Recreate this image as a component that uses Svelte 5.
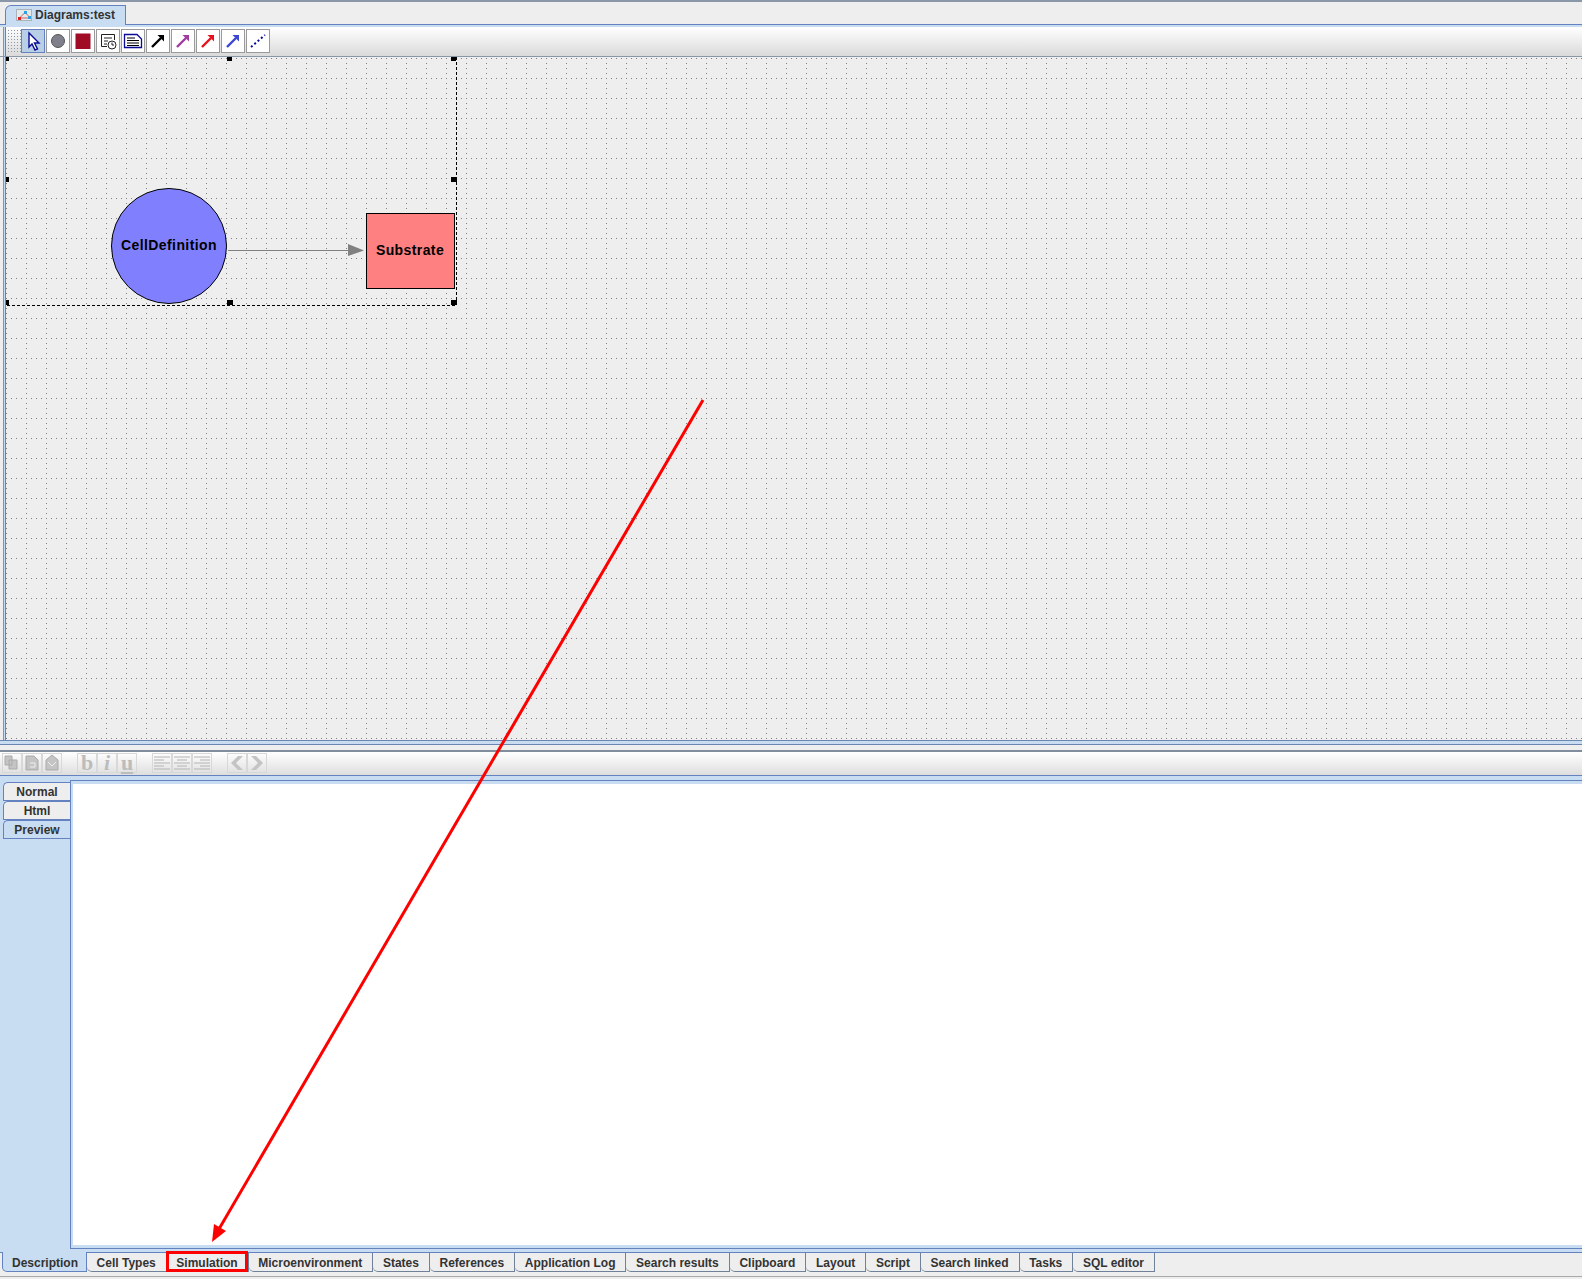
<script lang="ts">
  const bottomTabs = [
    "Description", "Cell Types", "Simulation", "Microenvironment", "States", "References",
    "Application Log", "Search results", "Clipboard", "Layout", "Script", "Search linked",
    "Tasks", "SQL editor",
  ];
  const viewTabs = ["Normal", "Html", "Preview"];
  const arrowColors = ["#000000", "#a03ca0", "#e8101c", "#3c46d2"];
  const handles = [
    [6, 57, 3, 4], [227, 57, 5, 4], [451, 57, 5, 4],
    [6, 177, 3, 5], [451, 177, 6, 5],
    [6, 300, 3, 5], [227, 300, 6, 5], [451, 300, 6, 5],
  ];
</script>

<div class="app">
  <div class="top-line"></div>
  <div class="tab-strip">
    <div class="doc-tab">
      <svg width="16" height="12" viewBox="0 0 16 12">
        <rect x="0.5" y="0.5" width="15" height="11" fill="#e4eaec" stroke="#aab4b8" />
        <path d="M4 8.5 L9 3.5 L13 7.5 M4 9 H12" fill="none" stroke="#d06060" />
        <rect x="2" y="8" width="3" height="3" fill="#e02020" />
        <rect x="8" y="2" width="3" height="3" fill="#30a0e0" />
        <rect x="12" y="7" width="3" height="3" fill="#30a0e0" />
      </svg>
      <span>Diagrams:test</span>
    </div>
  </div>

  <div class="toolbar">
    <div class="grip"></div>
    <div class="tool active">
      <svg width="20" height="20" viewBox="0 0 20 20">
        <path d="M6 2 L6 16 L9 13 L12 19 L14.5 18 L11.5 12 L16 12 Z" fill="#fff" stroke="#0a0a96" stroke-width="1.4" />
      </svg>
    </div>
    <div class="tool">
      <svg width="20" height="20" viewBox="0 0 20 20">
        <circle cx="10" cy="10" r="6.5" fill="#80808c" stroke="#555" />
      </svg>
    </div>
    <div class="tool">
      <svg width="20" height="20" viewBox="0 0 20 20">
        <rect x="2.5" y="2.5" width="15" height="15.5" fill="#a00c24" />
      </svg>
    </div>
    <div class="tool">
      <svg width="20" height="20" viewBox="0 0 20 20">
        <path d="M3.5 3.5 H16.5 V9 M3.5 3.5 V15.5 H9 M6 7 H14 M6 10 H10 M6 13 H9" fill="none" stroke="#222" />
        <circle cx="14" cy="14" r="4" fill="#fff" stroke="#222" />
        <path d="M14 11.5 V14 H16" fill="none" stroke="#222" />
      </svg>
    </div>
    <div class="tool">
      <svg width="20" height="20" viewBox="0 0 20 20">
        <path d="M1.5 3.5 H14 L18.5 8 V16.5 H1.5 Z" fill="#fff" stroke="#0a0a96" stroke-width="1.3" />
        <path d="M4 7 H12 M4 9.5 H16 M4 12 H16 M4 14.5 H16" stroke="#000" stroke-width="1.2" />
      </svg>
    </div>
    {#each arrowColors as color}
      <div class="tool">
        <svg width="20" height="20" viewBox="0 0 20 20">
          <path d="M4 16 L13 7" stroke={color} stroke-width="2.4" />
          <path d="M9.5 4 H16 V10.5 Z" fill={color} />
        </svg>
      </div>
    {/each}
    <div class="tool">
      <svg width="20" height="20" viewBox="0 0 20 20">
        <path d="M3 16 L17 4" stroke="#0a0a96" stroke-width="2" stroke-dasharray="2 2.4" />
      </svg>
    </div>
  </div>

  <div class="canvas-frame">
    <svg class="canvas" width="1582" height="683" viewBox="0 57 1582 683">
      <defs>
        <pattern id="grid" x="6" y="58" width="20" height="20" patternUnits="userSpaceOnUse">
          <rect x="0" y="0" width="1" height="1" fill="#808080" />
          <rect x="5" y="0" width="1" height="1" fill="#808080" />
          <rect x="10" y="0" width="1" height="1" fill="#808080" />
          <rect x="15" y="0" width="1" height="1" fill="#808080" />
          <rect x="0" y="5" width="1" height="1" fill="#808080" />
          <rect x="0" y="10" width="1" height="1" fill="#808080" />
          <rect x="0" y="15" width="1" height="1" fill="#808080" />
        </pattern>
      </defs>
      <rect x="0" y="57" width="1582" height="683" fill="#eeeeee" />
      <rect x="0" y="57" width="1582" height="683" fill="url(#grid)" />

      <circle cx="169" cy="246" r="57.5" fill="#8080ff" stroke="#000" />
      <text x="169" y="250" class="node-label">CellDefinition</text>

      <path d="M228 250.5 H350" stroke="#808080" />
      <path d="M348 244 L364 250.5 L348 256 Z" fill="#808080" />

      <rect x="366.5" y="213.5" width="88" height="75" fill="#ff8080" stroke="#000" />
      <text x="410" y="255" class="node-label">Substrate</text>

      <path d="M456.5 57 V305.5 H7" fill="none" stroke="#000" stroke-dasharray="3 2" />
      {#each handles as [x, y, w, h]}
        <rect {x} {y} width={w} height={h} fill="#000" />
      {/each}
    </svg>
  </div>

  <div class="divider"></div>

  <div class="format-bar">
    <div class="fmt-group">
      <div class="fmt">
        <svg width="18" height="18" viewBox="0 0 18 18">
          <path d="M2 2 H9 V6 H14 V15 H6 V11 H2 Z M6 6 H9 V11 H6 Z" fill="#c4c4c4" stroke="#aaa" />
        </svg>
      </div>
      <div class="fmt">
        <svg width="18" height="18" viewBox="0 0 18 18">
          <path d="M3 2 H11 L15 6 V16 H3 Z" fill="#c4c4c4" stroke="#aaa" />
          <path d="M7 9 H12 V13 H7" fill="none" stroke="#eee" />
        </svg>
      </div>
      <div class="fmt">
        <svg width="18" height="18" viewBox="0 0 18 18">
          <path d="M9 1 L15 6 V16 H3 V6 Z" fill="#c4c4c4" stroke="#aaa" />
          <path d="M5 8 L9 12 L13 8" fill="none" stroke="#eee" />
        </svg>
      </div>
    </div>
    <div class="fmt-group">
      <div class="fmt letter bold">b</div>
      <div class="fmt letter italic">i</div>
      <div class="fmt letter underline">u</div>
    </div>
    <div class="fmt-group">
      <div class="fmt">
        <svg width="18" height="18" viewBox="0 0 18 18"><path d="M1 3 H17 M1 6 H11 M1 9 H17 M1 12 H11 M1 15 H17" stroke="#b4b4b4" stroke-width="1.2" /></svg>
      </div>
      <div class="fmt">
        <svg width="18" height="18" viewBox="0 0 18 18"><path d="M1 3 H17 M4 6 H14 M1 9 H17 M4 12 H14 M1 15 H17" stroke="#b4b4b4" stroke-width="1.2" /></svg>
      </div>
      <div class="fmt">
        <svg width="18" height="18" viewBox="0 0 18 18"><path d="M1 3 H17 M7 6 H17 M1 9 H17 M7 12 H17 M1 15 H17" stroke="#b4b4b4" stroke-width="1.2" /></svg>
      </div>
    </div>
    <div class="fmt-group">
      <div class="fmt">
        <svg width="18" height="18" viewBox="0 0 18 18"><path d="M10 2 L3 9 L10 16 H15 L8 9 L15 2 Z" fill="#c4c4c4" /></svg>
      </div>
      <div class="fmt">
        <svg width="18" height="18" viewBox="0 0 18 18"><path d="M8 2 L15 9 L8 16 H3 L10 9 L3 2 Z" fill="#c4c4c4" /></svg>
      </div>
    </div>
  </div>

  <div class="editor-area">
    <div class="view-tabs">
      {#each viewTabs as tab, i}
        <div class="view-tab" class:selected={i === 2}>{tab}</div>
      {/each}
    </div>
    <div class="editor"></div>
  </div>

  <div class="bottom-tabs">
    {#each bottomTabs as tab, i}
      <div class="bottom-tab" class:selected={i === 0} class:boxed={i === 2}>{tab}</div>
    {/each}
  </div>
  <div class="bottom-end"></div>

  <svg class="annotation" width="1582" height="1279" viewBox="0 0 1582 1279">
    <path d="M703 400 L219 1229" stroke="#ff0000" stroke-width="3" fill="none" />
    <path d="M212 1242 L214 1224 L226 1231 Z" fill="#ff0000" />
  </svg>
</div>

<style>
  :global(body) {
    margin: 0;
    background: #eeeeee;
  }

  .app {
    position: relative;
    width: 1582px;
    height: 1279px;
    overflow: hidden;
    display: flex;
    flex-direction: column;
    font-family: "Liberation Sans", Arial, sans-serif;
    color: #333333;
  }

  .top-line {
    height: 2px;
    background: #8a97a8;
  }

  .tab-strip {
    height: 23px;
    box-sizing: border-box;
    padding: 3px 0 0 5px;
    background: #eeeeee;
    border-bottom: 1px solid #6382bf;
    display: flex;
  }

  .doc-tab {
    width: 121px;
    height: 20px;
    box-sizing: border-box;
    padding: 0 0 2px 10px;
    display: flex;
    align-items: center;
    gap: 3px;
    background: #c8ddf2;
    border: 1px solid #6382bf;
    border-bottom: none;
    border-top-left-radius: 6px;
    font-size: 12px;
    font-weight: bold;
    position: relative;
  }

  .toolbar {
    position: relative;
    height: 32px;
    box-sizing: border-box;
    padding: 2px 0 0 7px;
    display: flex;
    background: linear-gradient(#ffffff, #dadada);
    border-top: 2px solid #c8ddf2;
    border-bottom: 1px solid #8a97a8;
  }

  .grip {
    width: 14px;
    height: 24px;
    background-image: radial-gradient(#8a97a8 0.7px, transparent 0.8px);
    background-size: 3px 3px;
  }

  .tool {
    width: 24px;
    height: 24px;
    margin-right: 1px;
    box-sizing: border-box;
    border: 1px solid #9a9a9a;
    display: flex;
    align-items: center;
    justify-content: center;
    background: #ffffff;
  }

  .tool.active {
    background: #b8cfe5;
    border-color: #6382bf;
  }

  .canvas-frame {
    height: 683px;
    background: #eeeeee;
    position: relative;
    overflow: hidden;
  }

  .toolbar::before,
  .canvas-frame::before {
    content: "";
    position: absolute;
    left: 0;
    top: 0;
    bottom: 0;
    width: 6px;
    background: linear-gradient(90deg, #eeeeee 3px, #7f95b5 3px, #7f95b5 4px, #c8ddf2 4px, #c8ddf2 5px, #6382bf 5px);
    z-index: 1;
  }

  .canvas {
    display: block;
  }

  .node-label {
    font-family: "Liberation Sans", sans-serif;
    font-weight: bold;
    font-size: 14px;
    letter-spacing: 0.4px;
    text-anchor: middle;
    fill: #000000;
  }

  .divider {
    height: 12px;
    background: linear-gradient(#6b86b0 1px, #c8ddf2 1px, #c8ddf2 4px, #6b86b0 4px, #6b86b0 5px, #eeeeee 5px, #eeeeee 10px, #7f8d9d 10px);
  }

  .format-bar {
    height: 23px;
    box-sizing: border-box;
    padding: 1px 0 0 2px;
    display: flex;
    background: linear-gradient(#ffffff, #dedede);
  }

  .fmt-group {
    display: flex;
    margin-right: 15px;
  }

  .fmt {
    width: 20px;
    height: 20px;
    box-sizing: border-box;
    border: 1px solid #d8d8d8;
    display: flex;
    align-items: center;
    justify-content: center;
  }

  .letter {
    font-family: "Liberation Serif", serif;
    font-size: 22px;
    font-weight: bold;
    color: #bcbcbc;
  }

  .italic {
    font-style: italic;
  }

  .underline {
    text-decoration: underline;
  }

  .editor-area {
    height: 477px;
    box-sizing: border-box;
    display: flex;
    background: #c8ddf2;
    border-top: 1px solid #6382bf;
  }

  .view-tabs {
    width: 70px;
    padding: 6px 0 0 3px;
    box-sizing: border-box;
    flex-shrink: 0;
  }

  .view-tab {
    height: 19px;
    box-sizing: border-box;
    background: #eeeeee;
    border: 1px solid #6382bf;
    border-right: none;
    border-top-left-radius: 5px;
    font-size: 12px;
    font-weight: bold;
    line-height: 19px;
    text-align: center;
  }

  .view-tab.selected {
    background: #c8ddf2;
  }

  .editor {
    flex: 1;
    margin-top: 4px;
    margin-bottom: 3px;
    background: #ffffff;
    border: 1px solid #6382bf;
    border-right: none;
    box-shadow: inset 2px 3px 0 #c8ddf2, inset 0 -3px 0 #c8ddf2;
  }

  .bottom-tabs {
    height: 20px;
    box-sizing: border-box;
    display: flex;
    padding-left: 2px;
    border-top: 1px solid #6382bf;
    background: #eeeeee;
  }

  .bottom-tab {
    height: 19px;
    box-sizing: border-box;
    padding: 0 10px 0 9.6px;
    background: #eeeeee;
    border: 1px solid #6f8299;
    border-top: none;
    border-left: none;
    border-bottom-left-radius: 5px;
    font-size: 12px;
    font-weight: bold;
    line-height: 20px;
    white-space: nowrap;
  }

  .bottom-tab.selected {
    width: 85px;
    height: 20px;
    margin-top: -1px;
    padding-left: 9px;
    line-height: 22px;
    background: #c8ddf2;
    border-left: 1px solid #6382bf;
    border-color: #6382bf;
  }

  .bottom-tab.boxed {
    position: relative;
  }

  .bottom-tab.boxed::after {
    content: "";
    position: absolute;
    left: -1px;
    right: 0;
    top: -2px;
    bottom: -1px;
    border: 3px solid #ff0000;
  }

  .bottom-end {
    flex: 1;
    background: linear-gradient(#eeeeee 4px, #a8a8a8 4px, #a8a8a8 5px, #eeeeee 5px);
  }

  .annotation {
    position: absolute;
    left: 0;
    top: 0;
    pointer-events: none;
  }
</style>
